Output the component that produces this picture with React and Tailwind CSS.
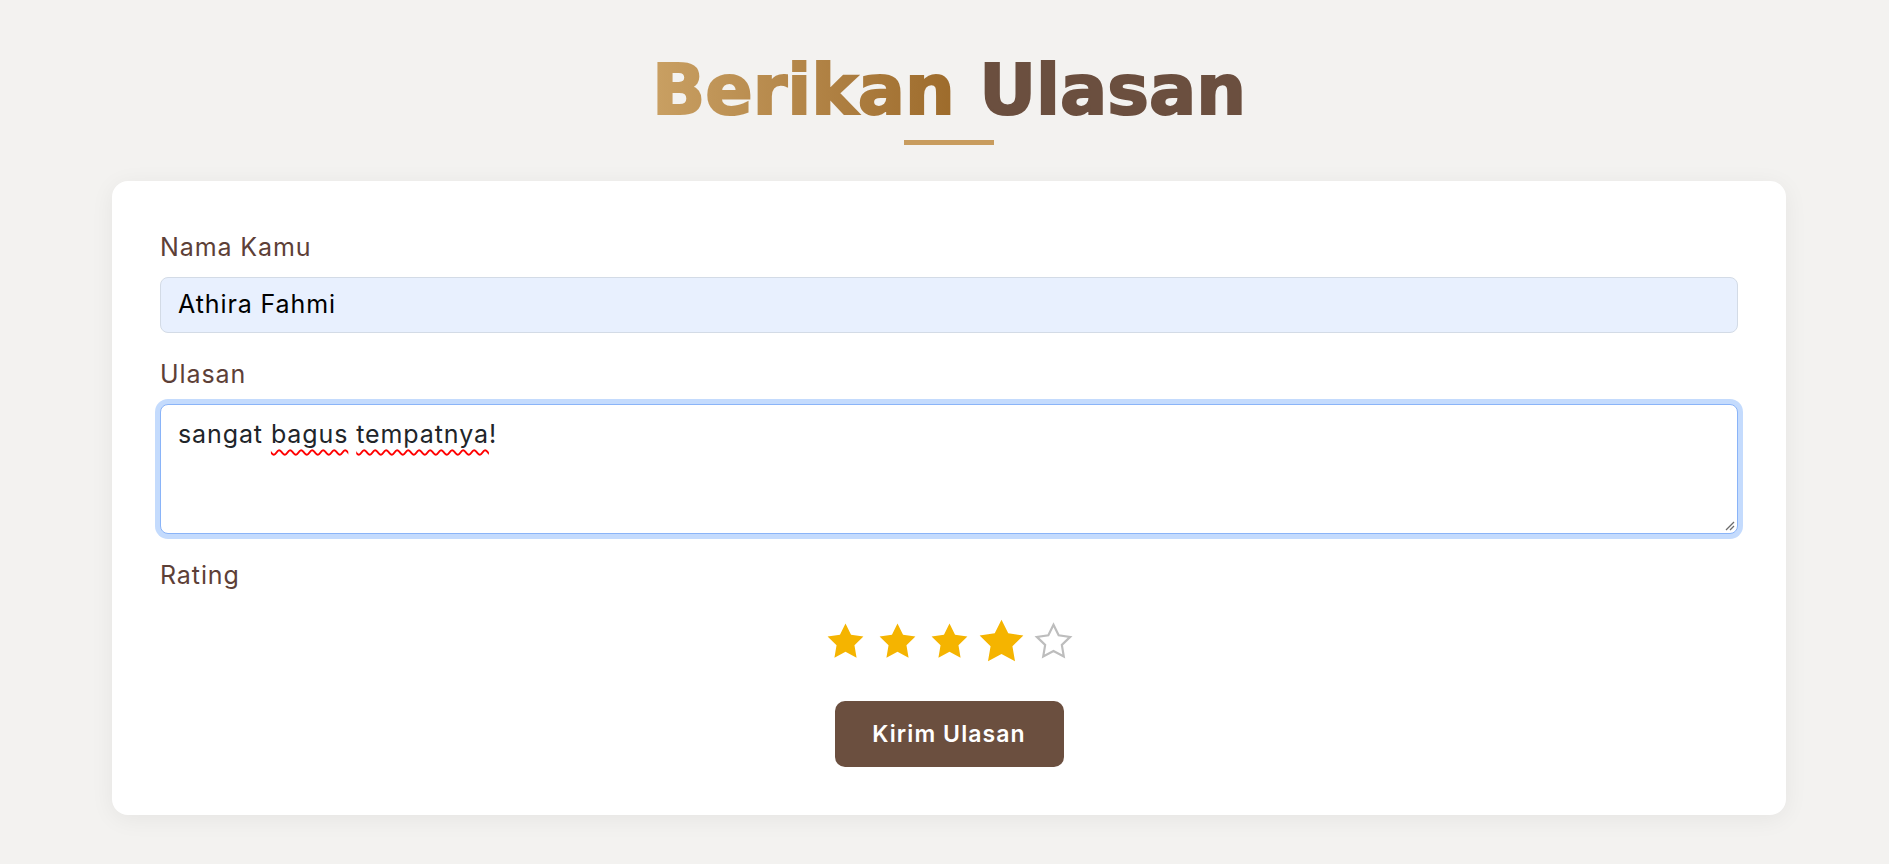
import React from "react";

const STAR = "12,2 15.09,8.26 22,9.27 17,14.14 18.18,21.02 12,17.77 5.82,21.02 7,14.14 2,9.27 8.91,8.26";

function Star({ filled, big }) {
  return (
    <svg
      viewBox="0 0 24 24"
      className={"w-[43px] h-[43px] " + (big ? "scale-[1.22]" : "")}
    >
      {filled ? (
        <polygon points={STAR} fill="#f5b400" />
      ) : (
        <polygon
          points={STAR}
          fill="none"
          stroke="#bdbdbd"
          strokeWidth="1.3"
          strokeLinejoin="miter"
          transform="translate(12 11.5) scale(0.93) translate(-12 -11.5)"
        />
      )}
    </svg>
  );
}

export default function App() {
  return (
    <div
      className="min-h-screen bg-[#f3f2f0] pt-[55px] pb-[50px] pl-[112px] pr-[103px]"
      style={{ fontFamily: "Inter, 'Noto Sans', sans-serif" }}
    >
      <div className="flex flex-col items-center">
        <h1
          className="text-[70px] leading-[70px] font-bold text-[#6b4f3f] whitespace-nowrap"
          style={{ fontFamily: "'DejaVu Sans', 'Liberation Sans', sans-serif" }}
        >
          <span className="bg-gradient-to-r from-[#c9a063] to-[#9d6b2b] bg-clip-text text-transparent [-webkit-text-stroke:2px_transparent]">
            Berikan
          </span>{" "}
          <span className="[-webkit-text-stroke:2px_#6b4f3f]">Ulasan</span>
        </h1>
        <div className="mt-[15px] h-[5px] w-[90px] bg-[#c89c5e]" />
      </div>

      <div className="mt-[36px] bg-white rounded-[16px] shadow-[0_4px_24px_rgba(0,0,0,0.06)] p-[48px]">
        <label className="block text-[25px] leading-[36px] text-[#5d4037] tracking-[0.9px]">
          Nama Kamu
        </label>
        <div className="mt-[12px] h-[56px] rounded-[8px] border border-[#d3dbe6] bg-[#e8f0fe] px-[17px] flex items-center text-[25px] text-black tracking-[0.9px]">
          Athira Fahmi
        </div>

        <label className="mt-[23px] block text-[25px] leading-[36px] text-[#5d4037] tracking-[0.9px]">
          Ulasan
        </label>
        <div className="relative mt-[12px] h-[130px] rounded-[8px] border border-[#8ab4f8] bg-white shadow-[0_0_0_5px_#c4dbfd] px-[17px] pt-[11px] text-[25px] leading-[36px] text-[#212529] tracking-[0.9px]">
          sangat{" "}
          <span className="underline decoration-wavy decoration-[#ff0000] decoration-[1.5px] underline-offset-[6px]">
            bagus
          </span>{" "}
          <span className="underline decoration-wavy decoration-[#ff0000] decoration-[1.5px] underline-offset-[6px]">
            tempatnya
          </span>
          !
          <svg
            viewBox="0 0 10 10"
            className="absolute right-[2px] bottom-[2px] w-[10px] h-[10px]"
          >
            <line x1="1" y1="9" x2="9" y2="1" stroke="#6b6b6b" strokeWidth="1.2" />
            <line x1="5" y1="9" x2="9" y2="5" stroke="#6b6b6b" strokeWidth="1.2" />
          </svg>
        </div>

        <label className="mt-[23px] block text-[25px] leading-[36px] text-[#5d4037] tracking-[0.9px]">
          Rating
        </label>
        <div className="mt-[27px] flex justify-center gap-[9px] pl-[1px]">
          <Star filled />
          <Star filled />
          <Star filled />
          <Star filled big />
          <Star />
        </div>

        <div className="mt-[38px] flex justify-center">
          <button className="w-[229px] h-[66px] rounded-[10px] bg-[#6b4f3f] text-white text-[23px] font-semibold tracking-[1.1px] flex items-center justify-center">
            Kirim Ulasan
          </button>
        </div>
      </div>
    </div>
  );
}
